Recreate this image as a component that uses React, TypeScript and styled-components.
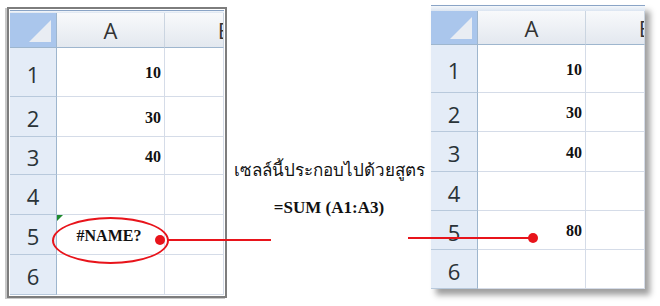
import React from 'react';
import styled, { createGlobalStyle, css } from 'styled-components';

const GlobalStyle = createGlobalStyle`
  html, body {
    margin: 0;
    padding: 0;
    background: #ffffff;
  }
  * {
    box-sizing: border-box;
  }
`;

const RED = '#e8141b';
const GRID = '#d5dce8';
const HEAD_LINE = '#9eb6ce';

const Page = styled.div`
  position: relative;
  width: 660px;
  height: 306px;
  display: flex;
  align-items: flex-start;
  background: #ffffff;
  overflow: hidden;
`;

const Frame = styled.div<{ $framed?: boolean }>`
  flex: none;
  display: flex;
  flex-direction: column;
  background: #ffffff;
  ${(p) =>
    p.$framed
      ? css`
          margin: 7px 0 0 7px;
          padding: 1px;
          border: 2px solid #7d7d7d;
          box-shadow: -2px 1px 0 #c9c9c9;
        `
      : css`
          margin: 5px 0 0 0;
          box-shadow: 5px 6px 6px rgba(0, 0, 0, 0.38);
        `}
`;

const TopStrip = styled.div<{ $h: number }>`
  height: ${(p) => p.$h}px;
  border-top: 1px solid #8aa4c6;
  background: linear-gradient(#f4f7fb, #dbe5f1);
`;

const Row = styled.div<{ $h: number }>`
  display: grid;
  grid-template-columns: 47px 108px 59px;
  height: ${(p) => p.$h}px;
`;

const Corner = styled.div`
  position: relative;
  background: #aac6ec;
  border-right: 1px solid ${HEAD_LINE};
  border-bottom: 1px solid ${HEAD_LINE};

  &::after {
    content: '';
    position: absolute;
    right: 5px;
    bottom: 5px;
    width: 0;
    height: 0;
    border-left: 22px solid transparent;
    border-bottom: 22px solid #e9edf3;
  }
`;

const ColHead = styled.div<{ $clip?: boolean }>`
  display: flex;
  align-items: center;
  justify-content: ${(p) => (p.$clip ? 'flex-end' : 'center')};
  overflow: hidden;
  background: linear-gradient(#f8f9fb, #e3e8ef);
  border-right: 1px solid #cbd5e1;
  border-bottom: 1px solid ${HEAD_LINE};
  font-family: 'Open Sans', 'Liberation Sans', sans-serif;
  font-size: 22px;
  color: #333333;

  & > span {
    margin-right: ${(p) => (p.$clip ? '-9px' : '0')};
  }
`;

const RowHead = styled.div`
  display: flex;
  align-items: center;
  justify-content: center;
  padding-top: 3px;
  background: #e4ecf7;
  border-right: 1px solid ${HEAD_LINE};
  border-bottom: 1px solid #b8c9dc;
  font-family: 'Open Sans', 'Liberation Sans', sans-serif;
  font-size: 22px;
  color: #2a3338;
`;

const Cell = styled.div<{ $align?: 'right' | 'center'; $flag?: boolean }>`
  position: relative;
  display: flex;
  align-items: center;
  justify-content: ${(p) => (p.$align === 'center' ? 'center' : 'flex-end')};
  padding-right: 3px;
  padding-top: 2px;
  border-right: 1px solid ${GRID};
  border-bottom: 1px solid ${GRID};
  font-family: 'Liberation Serif', 'Times New Roman', serif;
  font-weight: bold;
  font-size: 16px;
  color: #111111;

  ${(p) =>
    p.$flag &&
    css`
      &::before {
        content: '';
        position: absolute;
        left: 0;
        top: 0;
        border-top: 6px solid #1e8a2e;
        border-right: 6px solid transparent;
      }
    `}
`;

const Middle = styled.div`
  flex: none;
  width: 204px;
  display: flex;
  flex-direction: column;
  align-items: center;
  padding-top: 158px;
  font-family: 'Liberation Serif', 'Times New Roman', serif;
  color: #111111;
`;

const Note = styled.div`
  font-size: 17px;
  line-height: 26px;
  white-space: nowrap;
`;

const Formula = styled.div`
  margin-top: 14px;
  font-size: 17px;
  font-weight: bold;
`;

const Ellipse = styled.div`
  position: absolute;
  left: 52px;
  top: 217px;
  width: 117px;
  height: 47px;
  border: 2px solid ${RED};
  border-radius: 50%;
`;

const Wire = styled.div<{ $x: number; $y: number; $w: number }>`
  position: absolute;
  left: ${(p) => p.$x}px;
  top: ${(p) => p.$y}px;
  width: ${(p) => p.$w}px;
  height: 2px;
  background: ${RED};
`;

const Dot = styled.div<{ $x: number; $y: number }>`
  position: absolute;
  left: ${(p) => p.$x - 5}px;
  top: ${(p) => p.$y - 5}px;
  width: 10px;
  height: 10px;
  border-radius: 50%;
  background: ${RED};
`;

type SheetProps = {
  framed?: boolean;
  strip: number;
  head: number;
  heights: number[];
  values: Record<number, string>;
  flagRow?: number;
  centerRow?: number;
};

const Sheet: React.FC<SheetProps> = ({ framed, strip, head, heights, values, flagRow, centerRow }) => (
  <Frame $framed={framed}>
    <TopStrip $h={strip} />
    <Row $h={head}>
      <Corner />
      <ColHead>A</ColHead>
      <ColHead $clip>
        <span>B</span>
      </ColHead>
    </Row>
    {heights.map((h, i) => (
      <Row key={i} $h={h}>
        <RowHead>{i + 1}</RowHead>
        <Cell $flag={flagRow === i + 1} $align={centerRow === i + 1 ? 'center' : 'right'}>
          {values[i + 1] ?? ''}
        </Cell>
        <Cell />
      </Row>
    ))}
  </Frame>
);

export default function App() {
  return (
    <>
      <GlobalStyle />
      <Page>
        <Sheet
          framed
          strip={3}
          head={35}
          heights={[49, 40, 38, 40, 40, 40]}
          values={{ 1: '10', 2: '30', 3: '40', 5: '#NAME?' }}
          flagRow={5}
          centerRow={5}
        />
        <Middle>
          <Note>เซลล์นี้ประกอบไปด้วยสูตร</Note>
          <Formula>=SUM (A1:A3)</Formula>
        </Middle>
        <Sheet
          strip={6}
          head={34}
          heights={[48, 39, 40, 39, 39, 39]}
          values={{ 1: '10', 2: '30', 3: '40', 5: '80' }}
        />
        <Ellipse />
        <Dot $x={160} $y={240} />
        <Wire $x={168} $y={239} $w={103} />
        <Wire $x={408} $y={237} $w={125} />
        <Dot $x={533} $y={238} />
      </Page>
    </>
  );
}
